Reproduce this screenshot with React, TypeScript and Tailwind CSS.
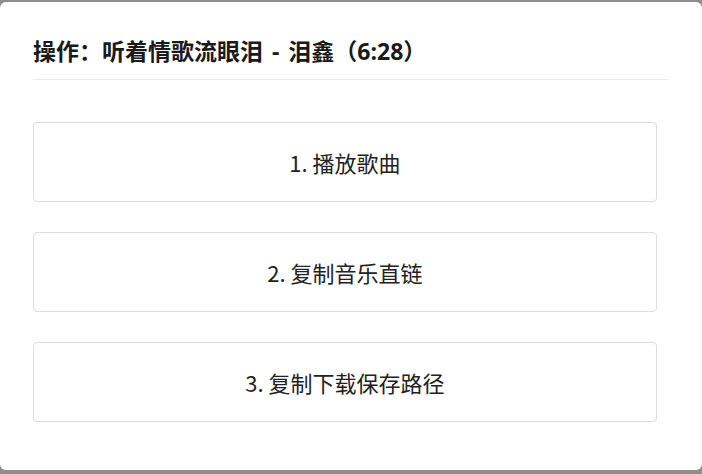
const actions = ["1. 播放歌曲", "2. 复制音乐直链", "3. 复制下载保存路径"];

export default function App() {
  return (
    <div
      className="h-[474px] w-[702px] bg-[#8e8e8e] pt-[2px] pb-[4px]"
      style={{ fontFamily: '"Noto Sans CJK SC", "Noto Sans", sans-serif' }}
    >
      <div className="h-full rounded-[6px] bg-white px-[33px] pt-[35px]">
        {/* Header */}
        <div className="border-b border-[#ececec] pb-[14px]">
          <h2
            className="text-[23px] leading-[28px] font-bold text-[#1a1a1a] [word-spacing:3px]"
            style={{ fontFamily: '"Open Sans", "Noto Sans CJK SC", sans-serif' }}
          >
            操作：听着情歌流眼泪 - 泪鑫（6:28）
          </h2>
        </div>

        {/* Actions */}
        <div className="mt-[42px] mr-[12px] flex flex-col gap-[30px]">
          {actions.map((label) => (
            <button
              key={label}
              className="flex h-[80px] items-center justify-center rounded-[4px] border border-[#dcdcdc] bg-white text-[22px] text-[#222]"
            >
              {label}
            </button>
          ))}
        </div>
      </div>
    </div>
  );
}
